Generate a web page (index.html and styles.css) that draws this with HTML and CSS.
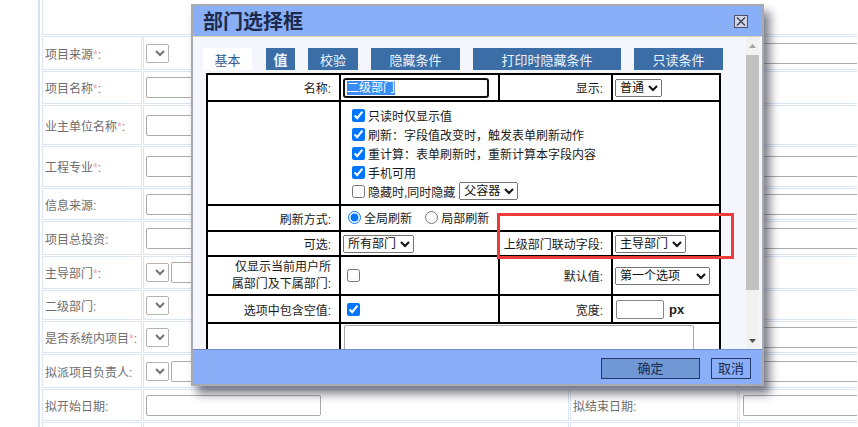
FILE: index.html
```html
<!DOCTYPE html>
<html lang="zh-CN">
<head>
<meta charset="utf-8">
<title>部门选择框</title>
<link rel="stylesheet" href="styles.css">
</head>
<body>
<table class="sheet">
  <colgroup><col class="c-lbl"><col class="c-val"><col class="c-lbl2"><col class="c-val2"></colgroup>
  <tr class="h35"><td class="head" colspan="4"></td></tr>
  <tr class="h34"><td class="lbl">项目来源<i>*</i>:</td><td class="val"><select class="bsel"><option></option></select></td><td class="lbl"></td><td class="val"><input class="binp wide" type="text"></td></tr>
  <tr class="h33"><td class="lbl">项目名称<i>*</i>:</td><td class="val"><input class="binp" type="text"></td><td class="lbl"></td><td class="val"></td></tr>
  <tr class="h40"><td class="lbl">业主单位名称<i>*</i>:</td><td class="val"><input class="binp" type="text"></td><td class="lbl"></td><td class="val"></td></tr>
  <tr class="h41"><td class="lbl">工程专业<i>*</i>:</td><td class="val"><input class="binp" type="text"></td><td class="lbl"></td><td class="val"><input class="binp wide" type="text"></td></tr>
  <tr class="h32"><td class="lbl">信息来源:</td><td class="val"><input class="binp" type="text"></td><td class="lbl"></td><td class="val"><input class="binp wide" type="text"></td></tr>
  <tr class="h34"><td class="lbl">项目总投资:</td><td class="val"><input class="binp" type="text"></td><td class="lbl"></td><td class="val"><input class="binp wide" type="text"></td></tr>
  <tr class="h33"><td class="lbl">主导部门<i>*</i>:</td><td class="val"><div class="pair"><select class="bsel"><option></option></select><input class="binp" type="text"></div></td><td class="lbl"></td><td class="val"></td></tr>
  <tr class="h30"><td class="lbl">二级部门:</td><td class="val"><select class="bsel"><option></option></select></td><td class="lbl"></td><td class="val"></td></tr>
  <tr class="h32"><td class="lbl">是否系统内项目<i>*</i>:</td><td class="val"><select class="bsel"><option></option></select></td><td class="lbl"></td><td class="val"><input class="binp wide" type="text"></td></tr>
  <tr class="h34"><td class="lbl">拟派项目负责人:</td><td class="val"><div class="pair"><select class="bsel"><option></option></select><input class="binp" type="text"></div></td><td class="lbl"></td><td class="val"><input class="binp wide" type="text"></td></tr>
  <tr class="h32"><td class="lbl">拟开始日期:</td><td class="val"><input class="binp" type="text"></td><td class="lbl">拟结束日期:</td><td class="val"><input class="binp wide" type="text"></td></tr>
  <tr class="h5"><td class="lbl"></td><td class="val"></td><td class="lbl"></td><td class="val"></td></tr>
</table>

<div class="dialog">
  <div class="dlg-title">
    <h1>部门选择框</h1>
    <span class="dlg-close">
      <svg width="14" height="13" viewBox="0 0 14 13"><rect x="0.5" y="0.5" width="13" height="12" fill="#d3d6e6" stroke="#4d4f6b"/><path d="M3 2.5 L11 10.5 M11 2.5 L3 10.5" stroke="#3a3c58" stroke-width="1.3"/></svg>
    </span>
  </div>
  <div class="dlg-body">
    <div class="dlg-scroll">
      <div class="tabs">
        <span class="tab tab-on t-base">基本</span>
        <span class="tab t-val">值</span>
        <span class="tab t-check">校验</span>
        <span class="tab t-hide">隐藏条件</span>
        <span class="tab t-print">打印时隐藏条件</span>
        <span class="tab t-ro">只读条件</span>
      </div>
      <table class="props">
        <colgroup><col class="p1"><col class="p2"><col class="p3"><col class="p4"></colgroup>
        <tr class="pr1">
          <td class="plbl">名称:</td>
          <td class="pval"><div class="field-focus"><span class="sel">二级部门</span></div></td>
          <td class="plbl">显示:</td>
          <td class="pval"><select class="psel"><option>普通</option></select></td>
        </tr>
        <tr class="pr2">
          <td class="plbl"></td>
          <td class="pval opts" colspan="3">
            <label class="opt"><input type="checkbox" checked>只读时仅显示值</label>
            <label class="opt"><input type="checkbox" checked>刷新：字段值改变时，触发表单刷新动作</label>
            <label class="opt"><input type="checkbox" checked>重计算：表单刷新时，重新计算本字段内容</label>
            <label class="opt"><input type="checkbox" checked>手机可用</label>
            <label class="opt"><input type="checkbox">隐藏时,同时隐藏<select class="psel gap"><option>父容器</option></select></label>
          </td>
        </tr>
        <tr class="pr3">
          <td class="plbl">刷新方式:</td>
          <td class="pval" colspan="3">
            <label class="radio"><input type="radio" name="mode" checked>全局刷新</label>
            <label class="radio"><input type="radio" name="mode">局部刷新</label>
          </td>
        </tr>
        <tr class="pr4">
          <td class="plbl">可选:</td>
          <td class="pval"><select class="psel"><option>所有部门</option></select></td>
          <td class="plbl">上级部门联动字段:</td>
          <td class="pval"><select class="psel"><option>主导部门</option></select></td>
        </tr>
        <tr class="pr5">
          <td class="plbl two">仅显示当前用户所<br>属部门及下属部门:</td>
          <td class="pval"><input type="checkbox"></td>
          <td class="plbl">默认值:</td>
          <td class="pval"><select class="psel w95"><option>第一个选项</option></select></td>
        </tr>
        <tr class="pr6">
          <td class="plbl">选项中包含空值:</td>
          <td class="pval"><input type="checkbox" checked></td>
          <td class="plbl">宽度:</td>
          <td class="pval"><input class="pinp" type="text"><b class="unit">px</b></td>
        </tr>
        <tr class="pr7">
          <td class="plbl"></td>
          <td class="pval top" colspan="3"><textarea class="parea"></textarea></td>
        </tr>
      </table>
    </div>
    <div class="vscroll">
      <span class="arr"><svg width="7" height="4" viewBox="0 0 7 4"><path d="M0 4 L3.5 0 L7 4 Z" fill="#a3a3a3"/></svg></span>
      <span class="thumb"></span>
      <span class="track"></span>
      <span class="arr"><svg width="7" height="4" viewBox="0 0 7 4"><path d="M0 0 L7 0 L3.5 4 Z" fill="#505050"/></svg></span>
    </div>
  </div>
  <div class="dlg-foot">
    <button class="btn btn-ok" type="button">确定</button>
    <button class="btn" type="button">取消</button>
  </div>
</div>

<div class="mark"></div>
</body>
</html>
```

FILE: styles.css
```css
* { box-sizing: border-box; }

html, body {
  margin: 0;
  height: 100%;
  overflow: hidden;
}

body {
  position: relative;
  background: #fff;
  font-family: "Liberation Sans", "Noto Sans CJK SC", sans-serif;
  font-size: 12px;
  color: #1a1a1a;
}

/* ---------- form sheet behind the dialog ---------- */
.sheet {
  margin: -1px 0 0 38px;
  border-collapse: separate;
  border-spacing: 1px;
  border-left: 2px solid #d6e2f4;
  padding-left: 1px;
  table-layout: fixed;
  width: 820px;
}
.c-lbl { width: 100px; }
.c-val { width: 426px; }
.c-lbl2 { width: 168px; }
.c-val2 { width: 118px; }

.sheet td {
  border: 1px solid #dbe5f4;
  padding: 0 2px;
  vertical-align: middle;
  color: #6e6e6e;
  white-space: nowrap;
  overflow: hidden;
}
.sheet td:last-child { border-right: 0; }
.sheet td.head { border-top: 0; }
.sheet .lbl i { font-style: normal; color: #f5a2b6; }

.h5 td { height: 5px; border-bottom: 0 !important; }
.h30 td { height: 30px; }
.h32 td { height: 32px; }
.h33 td { height: 33px; }
.h34 td { height: 34px; }
.h35 td { height: 35px; }
.h40 td { height: 40px; }
.h41 td { height: 41px; }

.binp {
  display: block;
  width: 175px;
  height: 21px;
  margin: 0;
  border: 1px solid #ababab;
  border-radius: 2px;
  background: #fff;
}
.binp.wide { width: 200px; margin-left: 1px; border-right: 0; border-radius: 2px 0 0 2px; }

.bsel {
  display: block;
  width: 23px;
  height: 19px;
  margin: 0;
  font-family: inherit;
  font-size: 12px;
  opacity: .55;
}
.pair { display: flex; align-items: center; gap: 2px; }

/* ---------- dialog ---------- */
.dialog {
  position: absolute;
  left: 191px;
  top: 4px;
  width: 573px;
  height: 382px;
  border: 2px solid #a9a9b2;
  background: #f5f6fb;
  display: flex;
  flex-direction: column;
  box-shadow: 6px 8px 9px rgba(40, 40, 60, .6);
}

.dlg-title {
  flex: none;
  height: 31px;
  background: #8aaff9;
  border-bottom: 1px solid #ddd6b2;
  display: flex;
  align-items: center;
  justify-content: space-between;
  padding: 2px 14px 0 10px;
}
.dlg-title h1 {
  margin: 0;
  font-size: 20px;
  line-height: 24px;
  font-weight: bold;
  color: #1c2b4b;
}
.dlg-close { display: flex; margin-top: -1px; }

.dlg-body {
  flex: 1;
  min-height: 0;
  display: flex;
  padding-right: 3px;
}
.dlg-scroll {
  flex: 1;
  overflow: hidden;
  padding: 11px 0 0 10px;
}

.tabs { display: flex; gap: 13px; height: 22px; }
.tab {
  display: flex;
  align-items: center;
  justify-content: center;
  background: #3b6ea6;
  color: #eef3fb;
  font-size: 13px;
}
.tab-on { background: #fff; color: #3a5b8e; margin-right: 1px; }
.t-base { width: 49px; }
.t-val { width: 29px; font-size: 14px; font-weight: bold; }
.t-check { width: 50px; }
.t-hide { width: 89px; }
.t-print { width: 148px; }
.t-ro { width: 89px; }

/* property table */
.props {
  margin: 3px 0 0 3px;
  width: 515px;
  table-layout: fixed;
  border-collapse: separate;
  border-spacing: 0;
  border: 1px solid #000;
  background: #fff;
}
.p1 { width: 133px; }
.p2 { width: 159px; }
.p3 { width: 113px; }
.p4 { width: 108px; }

.props td {
  border: 1px solid #000;
  padding: 0 2px;
  vertical-align: middle;
  white-space: nowrap;
  color: #1a1a1a;
}
.props td.plbl { text-align: right; padding-right: 8px; }
.props td.plbl.two { line-height: 17px; white-space: normal; }
.props td.top { vertical-align: top; }

.pr1 td { height: 27px; }
.pr2 td { height: 104px; }
.pr3 td { height: 26px; }
.pr4 td { height: 25px; }
.pr5 td { height: 39px; }
.pr6 td { height: 28px; }
.pr7 td { height: 50px; }

.field-focus {
  width: 146px;
  height: 20px;
  border: 2px solid #111;
  border-radius: 3px;
  background: #fff;
  display: flex;
  align-items: center;
  padding-left: 2px;
}
.sel {
  display: inline-block;
  background: #3a8cf4;
  color: #fff;
  line-height: 14px;
  height: 14px;
}

.psel {
  font-family: inherit;
  font-size: 12px;
  height: 18px;
  margin: 0;
  color: #111;
  vertical-align: middle;
}
.psel.gap { margin-left: 4px; }
.psel.w95 { width: 95px; }

.opts { padding-left: 7px !important; }
.opt { display: flex; align-items: center; height: 19px; }
.opt input { margin: 3px 3px 3px 4px; }

.radio { display: inline-flex; align-items: center; margin-right: 5px; }
.radio input { margin: 0 3px 0 5px; }

.pinp {
  width: 48px;
  height: 19px;
  margin: 0 0 0 1px;
  border: 1px solid #858585;
  border-radius: 2px;
  vertical-align: middle;
}
.unit {
  font-family: "Liberation Sans", sans-serif;
  font-size: 13px;
  margin-left: 5px;
  vertical-align: middle;
  color: #222;
}

.parea {
  display: block;
  width: 350px;
  height: 48px;
  margin: 1px 0 0 1px;
  border: 1px solid #a6a6a6;
  border-radius: 2px;
  resize: none;
}

/* scrollbar column */
.vscroll {
  flex: none;
  width: 13px;
  display: flex;
  flex-direction: column;
  background: #f1f1f1;
}
.arr {
  flex: none;
  height: 17px;
  display: flex;
  align-items: center;
  justify-content: center;
}
.thumb { flex: none; height: 235px; margin-top: 1px; background: #c1c1c1; }
.track { flex: 1; }

/* footer */
.dlg-foot {
  flex: none;
  height: 35px;
  background: #8aaef8;
  border-top: 1px solid #6e8ed0;
  display: flex;
  justify-content: flex-end;
  align-items: flex-start;
  gap: 11px;
  padding: 8px 11px 0 0;
}
.btn {
  height: 21px;
  padding: 0 6px;
  border: 1px solid #22396a;
  background: #8aaef8;
  color: #1a2a4c;
  font-family: "Liberation Sans", "Noto Sans CJK SC", sans-serif;
  font-size: 13px;
  line-height: 19px;
}
.btn-ok { width: 99px; background: #7098d4; }

/* highlight frame around the linked-field cell */
.mark {
  position: absolute;
  left: 497px;
  top: 213px;
  width: 237px;
  height: 46px;
  border: 3px solid #ef3a3a;
}
```
